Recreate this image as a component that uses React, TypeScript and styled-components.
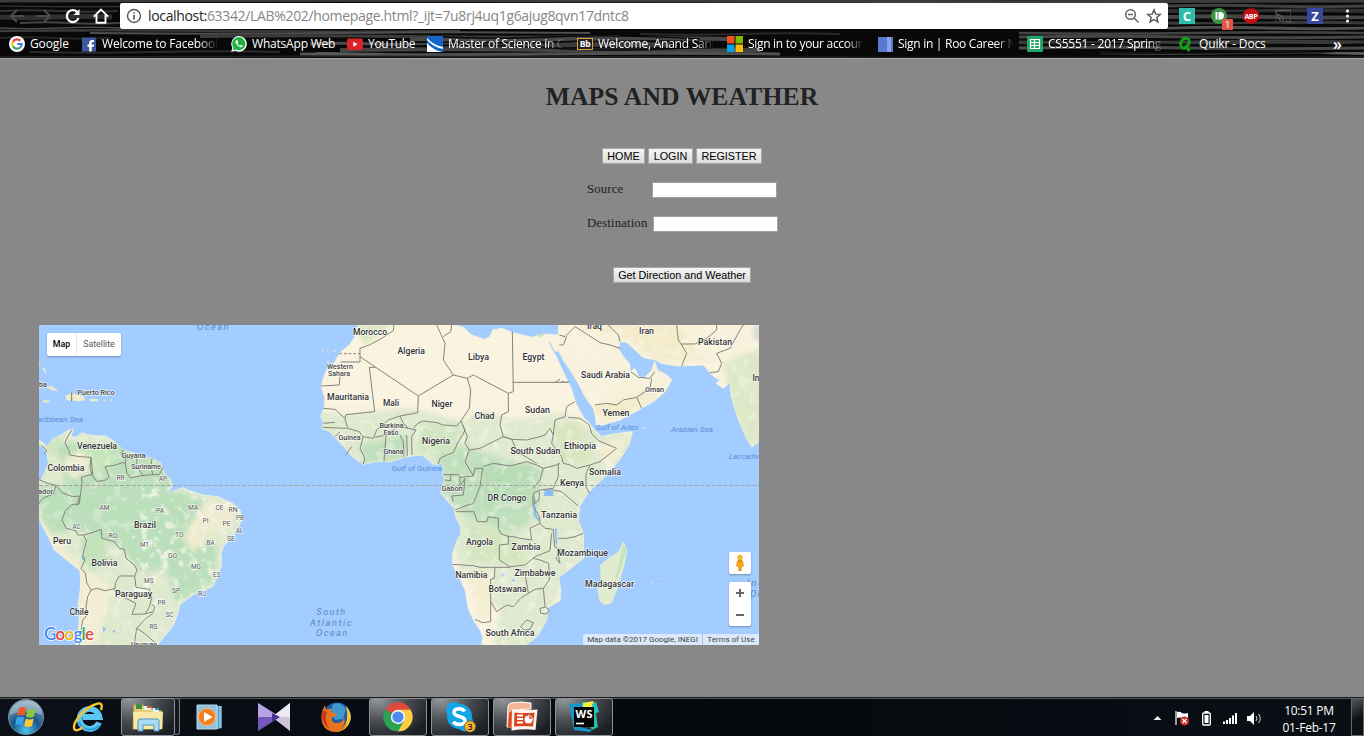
import React from 'react';
import styled, { createGlobalStyle, css } from 'styled-components';

const GlobalStyle = createGlobalStyle`
  html, body { margin: 0; padding: 0; background: #888; overflow: hidden; }
  * { box-sizing: border-box; }
`;

const uiFont = '"Segoe UI", "Open Sans", "Noto Sans", sans-serif';

const Screen = styled.div`
  width: 1364px;
  height: 736px;
  display: flex;
  flex-direction: column;
  overflow: hidden;
  background: #888;
`;

/* ---------- browser chrome ---------- */

const Chrome = styled.header`
  position: relative;
  height: 59px;
  flex: none;
  background: #080808;
  border-bottom: 1px solid #a3a3a3;
  font-family: ${uiFont};
`;

const Backdrop = styled.svg`
  position: absolute;
  inset: 0;
`;

const Toolbar = styled.div`
  position: relative;
  display: flex;
  align-items: center;
  height: 32px;
  padding-left: 9px;
`;

const NavButton = styled.span<{ $gap: number }>`
  display: flex;
  width: 16px;
  height: 16px;
  margin-right: ${(p) => p.$gap}px;
`;

const AddressBar = styled.div`
  display: flex;
  align-items: center;
  width: 1048px;
  height: 26px;
  padding: 0 6px 0 6px;
  background: #fff;
  border-radius: 2px;
`;

const Url = styled.span`
  flex: 1;
  margin-left: 6px;
  font-size: 14px;
  line-height: 20px;
  letter-spacing: -0.34px;
  color: #868686;
  white-space: nowrap;
`;

const Host = styled.span`
  color: #222;
`;

const BarIcon = styled.span`
  display: flex;
  margin-left: 6px;
`;

const Extensions = styled.div`
  display: flex;
  align-items: center;
  gap: 16px;
  margin-left: 11px;
`;

const ExtensionSlot = styled.span`
  position: relative;
  display: flex;
  width: 16px;
  height: 16px;
`;

const Tile = styled.span<{ $bg: string }>`
  width: 16px;
  height: 16px;
  background: ${(p) => p.$bg};
  color: #fff;
  font: 700 13px/16px "Open Sans", sans-serif;
  text-align: center;
`;

const CountBadge = styled.span`
  position: absolute;
  left: 11px;
  top: 11px;
  width: 11px;
  height: 11px;
  border-radius: 1px;
  background: #e2574a;
  color: #fff;
  font: 9px/11px "Open Sans", sans-serif;
  text-align: center;
`;

const MenuDots = styled.span`
  display: flex;
  margin-left: 14px;
`;

const Bookmarks = styled.div`
  position: relative;
  display: flex;
  align-items: center;
  height: 24px;
  padding-left: 9px;
`;

const Bookmark = styled.span<{ $pitch: number }>`
  display: flex;
  align-items: center;
  flex: none;
  width: ${(p) => p.$pitch}px;
`;

const BookmarkLabel = styled.span<{ $fade?: boolean; $track: number }>`
  margin-left: 5px;
  color: #fff;
  font-size: 12px;
  line-height: 18px;
  letter-spacing: ${(p) => p.$track}px;
  white-space: nowrap;
  overflow: hidden;
  ${(p) =>
    p.$fade &&
    css`
      width: 115px;
      mask-image: linear-gradient(90deg, #000 98px, transparent 116px);
    `}
`;

const Overflow = styled.span`
  margin-left: 8px;
  color: #fff;
  font: 600 16px/18px ${uiFont};
`;

/* ---------- page ---------- */

const Page = styled.main`
  flex: 1;
  display: flex;
  flex-direction: column;
  align-items: center;
  color: #222;
  font-family: "Liberation Serif", "Times New Roman", serif;
  font-size: 12.8px;
`;

const Title = styled.h1`
  margin: 23px 0 0;
  font-size: 25.6px;
  line-height: 30px;
  letter-spacing: 0.12px;
`;

const ButtonRow = styled.div`
  display: flex;
  gap: 3px;
  margin-top: 36px;
`;

const PageButton = styled.button<{ $w: number }>`
  width: ${(p) => p.$w}px;
  height: 16px;
  padding: 0;
  border: 1px solid #a6a6a6;
  background: linear-gradient(#f5f5f5, #dcdcdc);
  color: #000;
  font: 10.8px/13px "Liberation Sans", Arial, sans-serif;
  white-space: nowrap;
`;

const Fields = styled.div`
  display: flex;
  flex-direction: column;
  gap: 18px;
  width: 190px;
  margin: 18px 0 35px;
  letter-spacing: 0.13px;
`;

const Field = styled.label<{ $indent: number }>`
  display: grid;
  grid-template-columns: ${(p) => p.$indent}px 125px;
  height: 16px;
  line-height: 15px;
`;

const TextInput = styled.input`
  width: 125px;
  height: 16px;
  padding: 0 2px;
  border: 1px solid #a0a0a0;
  background: #fff;
  outline: none;
`;

const MapFrame = styled.section`
  position: relative;
  align-self: flex-start;
  width: 720px;
  height: 320px;
  margin: 42px 0 0 39px;
  overflow: hidden;
  background: #a3ccff;
  font-family: Roboto, sans-serif;
`;

const MapSvg = styled.svg`
  display: block;
  font-family: Roboto, sans-serif;
`;

const MapTypes = styled.div`
  position: absolute;
  left: 8px;
  top: 8px;
  display: flex;
  height: 23px;
  background: #fff;
  border-radius: 2px;
  box-shadow: 0 1px 2px rgba(0, 0, 0, 0.3);
`;

const MapType = styled.span<{ $w: number; $active?: boolean }>`
  width: ${(p) => p.$w}px;
  font-size: 8.8px;
  line-height: 23px;
  text-align: center;
  font-weight: ${(p) => (p.$active ? 500 : 400)};
  color: ${(p) => (p.$active ? '#000' : '#565656')};
  border-right: ${(p) => (p.$active ? '1px solid #e6e6e6' : '0')};
`;

const MapControls = styled.div`
  position: absolute;
  right: 8px;
  top: 227px;
  display: flex;
  flex-direction: column;
  gap: 8px;
`;

const ControlBox = styled.div<{ $h: number }>`
  width: 22px;
  height: ${(p) => p.$h}px;
  background: #fff;
  border-radius: 2px;
  box-shadow: 0 1px 2px rgba(0, 0, 0, 0.3);
`;

const Attribution = styled.div`
  position: absolute;
  right: 0;
  bottom: 0;
  display: flex;
  width: 176px;
  height: 11px;
  background: rgba(235, 241, 248, 0.78);
  color: #444;
  font-size: 8px;
  line-height: 12px;
  white-space: nowrap;
`;

const Credit = styled.span<{ $w: number; $line?: boolean }>`
  width: ${(p) => p.$w}px;
  text-align: center;
  border-left: ${(p) => (p.$line ? '1px solid #a9c9ee' : '0')};
`;

/* ---------- taskbar ---------- */

const Taskbar = styled.footer`
  display: flex;
  flex: none;
  height: 39px;
  background: linear-gradient(90deg, #0b1018, #05080d 50%, #0a0f16);
  border-top: 1px solid #1a1a1a;
  box-shadow: inset 0 1px 0 #53575c;
  font-family: ${uiFont};
`;

const StartSlot = styled.div`
  display: flex;
  align-items: center;
  justify-content: center;
  width: 59px;
  padding-right: 7px;
`;

const TaskSlot = styled.div<{ $open?: boolean; $w: number }>`
  display: flex;
  align-items: center;
  justify-content: center;
  flex: none;
  width: ${(p) => p.$w}px;
  height: 38px;
  margin-right: ${(p) => 62 - p.$w}px;
  border-radius: 3px;
  ${(p) =>
    p.$open &&
    css`
      border: 1px solid #8d9195;
      background: radial-gradient(ellipse at 15% 0, #96999c 0, #4b4f53 42%, #1b1f24 85%);
    `}
`;

const Stack = styled.div`
  flex: none;
  width: 5px;
  height: 37px;
  margin: 0 3px 0 -8px;
  border: 1px solid #777b80;
  border-left: 0;
  border-radius: 0 3px 3px 0;
  background: #14181d;
`;

const Tray = styled.div`
  display: flex;
  align-items: center;
  margin-left: auto;
`;

const TrayIcons = styled.svg`
  display: block;
`;

const Clock = styled.div`
  width: 80px;
  padding: 3px 4px 0 0;
  color: #fff;
  font-size: 12px;
  line-height: 17px;
  letter-spacing: -0.25px;
  text-align: center;
`;

const ShowDesktop = styled.div`
  width: 13px;
  height: 38px;
  border: 1px solid #62676c;
  background: linear-gradient(150deg, #55595d, #0d1116 55%);
`;

/* ---------- drawings ---------- */

const streaks: [number, number, number, number, string][] = [
  [0, 1, 1364, 3, '#3c3c3c'], [0, 6, 330, 1.5, '#2e2e2e'], [0, 11, 118, 2, '#333'], [0, 17, 112, 5, '#303030'],
  [20, 23, 100, 2, '#444'], [0, 28, 120, 1.5, '#4a4a4a'], [0, 31, 460, 2.5, '#3a3a3a'], [90, 33, 500, 2, '#4e4e4e'],
  [200, 36.5, 420, 3, '#3c3c3c'], [410, 39, 320, 4, '#484848'], [310, 44, 130, 3, '#4a4a4a'], [430, 45, 240, 5, '#3b3b3b'],
  [340, 50, 420, 4, '#444'], [300, 54, 480, 3, '#505050'], [0, 38, 110, 2, '#242424'], [30, 52, 250, 2, '#2c2c2c'],
  [0, 57, 1364, 1.5, '#242424'], [1019, 33, 345, 2.5, '#444'], [1019, 37, 345, 3, '#454545'], [1019, 42.5, 345, 4, '#3a3a3a'],
  [1019, 48, 345, 3, '#4a4a4a'], [1100, 53, 264, 2.5, '#404040'], [1168, 6, 196, 3, '#404040'], [1168, 11, 196, 4, '#303030'],
  [1168, 17, 196, 4, '#454545'], [1168, 23, 196, 3, '#3a3a3a'], [1168, 28, 196, 3, '#505050'], [640, 34, 200, 2, '#2a2a2a'],
];

const ChromeBackdrop = () => (
  <Backdrop width="1364" height="58">
    <g fill="none">
      {streaks.map(([x, y, w, h, c], i) => (
        <path key={i} stroke={c} strokeWidth={h} d={`M${x} ${y}q${w * 0.25} ${i % 2 ? 1.4 : -1.4} ${w * 0.5} 0t${w * 0.5} 0`} />
      ))}
      <path d="M430 36q60 4 120 1t150 2M380 47q80-4 170 1t160-2M450 41q70 4 130 0M1019 45q90-3 170 0t175-1M1168 14q60-3 196 1M1168 26q90-3 196 0M1019 51q100 4 345 0" stroke="#090909" strokeWidth="1.500" />
    </g>
    <path d="M303 55l16-3 70 1-20 2zM1322 54l14-2h28v3z" fill="#5a5a5a" />
  </Backdrop>
);

const GoogleG = () => (
  <svg width="16" height="16" viewBox="0 0 16 16">
    <circle cx="8" cy="8" r="8" fill="#fff" />
    <g fill="none" strokeWidth="2.2">
      <path d="M11.4 4.7A4.7 4.7 0 0 0 3.9 5.8" stroke="#ea4335" />
      <path d="M3.9 5.7a4.7 4.7 0 0 0 0 4.6" stroke="#fbbc05" />
      <path d="M3.9 10.3a4.7 4.7 0 0 0 7.2 1.2" stroke="#34a853" />
      <path d="M11.1 11.5A4.5 4.5 0 0 0 12.7 8H8.2" stroke="#4285f4" />
    </g>
  </svg>
);

const FacebookIcon = () => (
  <svg width="16" height="16" viewBox="0 0 16 16">
    <rect x="1" y="1.500" width="14" height="14" fill="#3b5998" />
    <path d="M8.200 15.500v-4.700H6.500V8.600h1.700V7c0-2 1.100-3 2.900-3H13v2.100h-1.200c-.9 0-1.100.4-1.100 1.100v1.400H13l-.3 2.200h-2v4.700z" fill="#fff" />
  </svg>
);

const WhatsAppIcon = () => (
  <svg width="16" height="16" viewBox="0 0 16 16">
    <path d="M.3 15.8l1-4A7.800 7.800 0 1 1 4.400 14.800z" fill="#fff" />
    <path d="M1.800 14.300l.7-2.600A6.600 6.600 0 1 1 4.700 13.600z" fill="#1fb141" />
    <path d="M5.300 4.200c-1.500 1.200-.8 3 .9 4.900s4 3 5.300 1.500c.6-.8.300-1.100-1.200-1.700-.8-.3-.8.900-1.400.8C7.800 9.200 6.700 8.100 6.500 7.200c0-.5.8-.6.5-1.300-.5-1.300-.8-2.100-1.700-1.700" fill="#fff" />
  </svg>
);

const YouTubeIcon = () => (
  <svg width="16" height="16" viewBox="0 0 16 16">
    <rect x="0" y="2.500" width="16" height="11.500" rx="2" fill="#d9252a" />
    <path d="M6.300 5.800v5l4.200-2.500z" fill="#fff" />
  </svg>
);

const UmkcIcon = () => (
  <svg width="16" height="16" viewBox="0 0 16 16">
    <rect width="16" height="16" fill="#1467c8" />
    <path d="M0 2q6 7 16 9v2Q6 11 0 4zM0 7q6 7 15 9H0z" fill="#fff" />
  </svg>
);

const BbBox = styled.span`
  width: 16px;
  height: 12px;
  border: 1px solid #d3a53a;
  background: #222;
  color: #fff;
  font: 700 8.5px/9px "Open Sans", sans-serif;
  letter-spacing: -0.3px;
  text-align: center;
`;

const MicrosoftIcon = () => (
  <svg width="16" height="16" viewBox="0 0 16 16">
    <path d="M0 0h7.500v7.500H0z" fill="#f25022" />
    <path d="M8.500 0H16v7.500H8.500z" fill="#7fba00" />
    <path d="M0 8.500h7.500V16H0z" fill="#00a4ef" />
    <path d="M8.500 8.500H16V16H8.500z" fill="#ffb900" />
  </svg>
);

const RooIcon = () => (
  <svg width="16" height="16" viewBox="0 0 16 16">
    <rect x="1" y="1" width="15" height="15" fill="#5878d2" />
    <rect x="10" y="1" width="4" height="15" fill="#8aa2e6" />
  </svg>
);

const SheetsIcon = () => (
  <svg width="16" height="16" viewBox="0 0 16 16">
    <rect width="16" height="16" rx="1" fill="#23a566" />
    <path d="M3.500 3.500h9v9h-9zM3.500 6.500h9M3.500 9.500h9M7.500 3.500v9" fill="none" stroke="#fff" strokeWidth="1.200" />
  </svg>
);

const QuikrIcon = () => (
  <svg width="16" height="16" viewBox="0 0 16 16">
    <path d="M8.500 2.200C3.500 1.800.5 9.500 4.500 12c5.500 2 9.500-9 4-9.800M7 9.500l4.500 5.500" fill="none" stroke="#10a316" strokeWidth="2.900" />
  </svg>
);

const bookmarks: { label: string; pitch: number; icon: React.ReactNode; fade?: boolean; track: number }[] = [
  { label: 'Google', pitch: 72, icon: <GoogleG />, track: -0.1 },
  { label: 'Welcome to Facebook', pitch: 150, icon: <FacebookIcon />, fade: true, track: -0.2 },
  { label: 'WhatsApp Web', pitch: 116, icon: <WhatsAppIcon />, track: -0.2 },
  { label: 'YouTube', pitch: 80, icon: <YouTubeIcon />, track: -0.3 },
  { label: 'Master of Science in C', pitch: 150, icon: <UmkcIcon />, fade: true, track: -0.3 },
  { label: 'Welcome, Anand Sanj', pitch: 150, icon: <BbBox>Bb</BbBox>, fade: true, track: -0.24 },
  { label: 'Sign in to your accour', pitch: 150, icon: <MicrosoftIcon />, fade: true, track: -0.3 },
  { label: 'Sign in | Roo Career N', pitch: 150, icon: <RooIcon />, fade: true, track: -0.28 },
  { label: 'CS5551 - 2017 Spring', pitch: 151, icon: <SheetsIcon />, fade: true, track: -0.24 },
  { label: 'Quikr - Docs', pitch: 147, icon: <QuikrIcon />, track: -0.15 },
];

/* Map outlines are drawn at three units per pixel. */
const southAmerica =
  'M0 490L15 480 25 460 38 430 33 398 20 380 0 370 0 355 20 368 35 380 50 357 75 345 98 330 112 328 104 350 118 352 140 338 152 344 180 348 208 348 235 364 262 390 290 398 320 412 350 415 375 430 385 460 402 478 410 495 395 520 440 503 460 512 500 525 545 530 590 550 612 570 616 600 606 625 585 655 562 680 555 700 556 735 545 770 530 800 500 812 470 825 432 853 424 885 412 915 385 950 362 978 122 978 130 900 127 850 134 800 132 752 90 718 55 690 37 650 0 580z';

const africa =
  'M245 0L232 20 226 48 208 75 180 98 165 125 140 150 128 180 124 200 135 235 132 265 122 288 130 305 126 325 150 335 165 352 190 378 215 408 250 433 290 424 330 425 380 410 425 405 445 420 462 434 485 430 492 445 488 465 494 480 485 500 483 520 500 540 523 565 527 590 542 620 543 640 530 665 518 700 518 735 537 770 555 810 565 865 580 900 600 930 608 950 605 978 735 978 775 945 800 900 804 862 840 842 842 808 836 772 873 745 910 715 910 640 896 605 898 560 927 515 980 465 1018 420 1047 375 1057 335 1000 342 965 350 942 328 928 310 910 292 888 250 872 200 852 160 826 105 802 62 812 68 824 92 832 96 838 72 835 45 790 42 755 52 700 38 665 25 638 30 630 50 612 58 575 45 550 22 515 12 515 0z';

const arabia =
  'M145 0L145 45 148 70 146 92 160 120 180 150 205 190 225 230 250 265 255 285 260 315 275 315 330 300 385 270 430 245 465 215 485 180 470 165 442 150 434 125 425 152 402 174 386 170 374 145 362 155 358 130 340 110 325 85 330 65 350 67 375 90 400 113 432 118 455 130 505 138 580 135 600 158 612 170 630 180 618 190 640 205 660 187 664 230 682 290 705 345 725 380 742 370 757 330 757 0z';

const palette = { land: '#faf3df', pale: '#dfe9ce', green: '#bbdfba', line: '#86847d' };

const Borders = styled.g`
  fill: none;
  stroke: ${palette.line};
  stroke-width: 3;
  stroke-linejoin: round;
`;

const WorldMap = () => (
  <MapSvg width="720" height="320" viewBox="39 325 720 320">
    <defs>
      <clipPath id="sa"><path d={southAmerica} /></clipPath>
      <clipPath id="af"><path d={africa} /></clipPath>
      <clipPath id="ar"><path d={arabia} /></clipPath>
      <filter id="soft" x="-20%" y="-20%" width="140%" height="140%"><feGaussianBlur stdDeviation="8" /></filter>
      <filter id="speckle" x="0" y="0" width="100%" height="100%">
        <feTurbulence type="fractalNoise" baseFrequency="0.035" numOctaves="4" seed="8" />
        <feColorMatrix values="0 0 0 0 .96  0 0 0 0 .96  0 0 0 0 .86  0 5 0 0 -2.6" />
      </filter>
    </defs>
    <g transform="translate(36 320) scale(.33333)">
      <path d={southAmerica} fill={palette.pale} stroke="#e8f1e6" strokeWidth="3" />
      <g clipPath="url(#sa)">
        <g filter="url(#soft)">
          <path d="M60 370L240 370 400 440 400 510 520 540 470 620 540 680 540 780 420 850 390 740 320 760 250 680 130 630 40 640 0 560 0 500 90 500z" fill={palette.green} />
          <path d="M130 380l90-10 30 60-60 40z" fill="#c6e5bb" />
          <path d="M80 420L130 390 160 415 160 460 100 470z" fill="#eeeccf" />
          <path d="M510 540L600 550 590 620 530 640 470 700 440 650z" fill="#eeebcf" />
          <path d="M0 580L60 660 140 740 230 800 180 980 120 980 128 760 20 680z" fill="#f3eed3" />
          <path d="M130 650L190 640 230 720 150 760z" fill="#c3e2b8" />
          <path d="M10 480L50 420 80 350 30 360z" fill="#cfe5bc" />
        </g>
        <rect x="290" y="500" width="330" height="350" filter="url(#speckle)" opacity=".6" />
        <rect x="10" y="340" width="400" height="640" filter="url(#speckle)" opacity=".35" />
        <path d="M136 712l8-6 3 12-6 4zM200 920l10 5-8 14zM228 935l8-6 3 10z" fill="#8fbdf2" />
      </g>
      <path d="M25 195l25 5 18 14-20-3zM88 228l18-8 35 8 8 12-22 4-35-3zM160 237h26v7h-24zM22 240l22 2-10 6-12-2zM20 145l5-2 6 14-4 3zM5 128l8 3 2 8zM202 239l5 2v3h-5zM224 238h4v6h-4z" fill="#eeecca" />
      <path d="M107 218v26" stroke="#777" strokeWidth="3" />
      <Borders>
        <path d="M108 330L95 350 87 368 98 390 102 405 130 410 165 412 162 440 168 465 182 484 205 482 220 472 207 440 235 436 260 428 268 430 272 458 284 474 310 468 345 464 370 464 382 440" />
        <path d="M262 390L255 402 270 414 268 430M303 405L302 440 322 468M348 415L345 437 350 464M165 412L170 462 136 472 138 488 130 552 120 555" />
        <path d="M0 475L30 488 60 496 78 518 110 530 130 528 125 552 108 554 88 572 78 600 90 625 120 632 125 645 142 645 172 637 195 628 198 655 235 665 250 685 265 688 270 715 295 735 303 750 296 768 250 768 238 790 236 812" />
        <path d="M60 496L52 522 20 535 0 562M142 645L152 662 145 685 140 708 147 720 135 745 148 760 153 790 165 810 182 805 208 812 235 806M165 810L155 830 150 860 153 885 140 900 135 935 130 975" />
        <path d="M296 768L300 802 340 808 347 835 340 860 328 882 288 883 300 850 270 835 236 812M328 882L352 875 356 860 347 852M352 880L330 895 302 925 325 940 362 972M302 925L294 978M15 375l18 18-10 8" />
      </Borders>
    </g>
    <g transform="translate(280 320) scale(.33333)">
      <path d={africa} fill={palette.land} stroke="#eef0df" strokeWidth="3" />
      <g clipPath="url(#af)">
        <g filter="url(#soft)">
          <path d="M100 275L200 285 350 265 420 270 550 305 600 270 690 300 850 280 920 320 1060 330 1060 400 900 560 930 720 840 800 790 980 640 980 660 870 540 760 500 550 380 450 180 440z" fill={palette.pale} />
          <path d="M240 375L380 345 380 410 250 440zM470 400L560 380 700 430 790 450 770 600 690 640 560 590 490 520z" fill="#c0e0bd" />
          <path d="M580 440L760 430 750 560 620 580z" fill="#b8ddb6" />
          <path d="M410 310L540 310 530 400 420 400z" fill="#d0e6c0" />
          <path d="M560 600L700 650 740 730 560 720z" fill="#d3e6bf" />
          <path d="M820 320L900 300 930 420 850 430z" fill="#dae5bf" />
          <path d="M560 760L640 750 630 880 600 900zM950 380L1050 340 990 460z" fill="#f3edd2" />
          <path d="M230 15L340 15 250 75z" fill="#d9e6c0" />
        </g>
        <path d="M790 508h30v20h-28zM758 545l8 0 3 40 10 15-5 4-15-24zM824 625l6 0 2 50-5-2zM660 760l15 2-8 10zM695 780l8-3 2 9z" fill="#8dbcf5" />
        <rect x="120" y="300" width="940" height="680" filter="url(#speckle)" opacity=".4" />
      </g>
      <Borders>
        <path d="M342 15L340 32 300 58 268 75 240 85 240 110 415 228 520 165 490 120 495 70 470 15M515 15L512 35 490 50M520 165L562 175 580 165 685 220 700 215 697 35M697 187L865 187" />
        <path d="M240 110L240 126 182 126M180 165L178 195 124 198M286 142L268 142 284 275 198 284 195 295M130 265L165 268 195 295 203 325 238 335 248 350 280 355 290 330 325 300 360 288 413 278 415 228" />
        <path d="M562 175L572 210 568 265 543 303 530 318 490 315 470 308 430 303 413 310 400 325M385 325L355 320 318 345 312 425M360 288L370 310 385 325 408 330M360 345L370 365 372 410M380 345L382 408M408 330L395 350 396 405M318 345L285 352M130 310L165 307M128 322L200 325M165 350L180 335M250 350L240 385 255 415 250 432M198 404L215 380" />
        <path d="M543 303L555 330 548 345 535 365 520 398 500 405 480 415 475 432M548 315L562 350 555 370 568 390 600 385 640 365 670 350 695 358M685 220L685 275 665 285 660 315 670 350 695 358 740 360 780 350 795 345 810 325 820 345M568 390L555 425 580 468 540 472 535 464 490 464M580 468L585 445 608 445 600 500 580 550 550 560 525 570M494 480L512 482M512 464V482M540 472L540 500 555 475M555 475L550 525 515 528 520 545" />
        <path d="M610 440L640 430 690 438 740 425 770 435 790 445 830 435 840 430M528 575L582 575 592 605 620 605 625 590 655 595 655 625 662 640 685 650 700 650 720 655 755 660 750 625 780 610 778 590 760 560 758 530M685 645V672L658 675 658 720 690 740 735 735 765 710 810 692 815 640" />
        <path d="M518 733L580 737 600 742 690 742M645 742L643 775 632 778 632 905 608 908 585 898M632 845L650 875 680 855 700 860 722 835 745 820 735 760 710 745 M745 820L765 808 790 805 808 780 806 730 780 720 760 715" />
        <path d="M695 358L705 380 720 400 740 412 770 430M820 345L825 300 855 290 860 260 885 245M820 345L815 370 845 410 850 430 870 435 890 445 930 435 960 425 1010 385 955 362 935 340 928 315M928 315L900 295 865 292M835 430L835 470 820 505 780 510 760 520 765 550 777 540 778 515M820 510L845 515 895 558M790 445L780 480 760 505M930 435L918 460 918 500 928 520M835 655L860 655 885 650 910 640" />
        <path d="M780 610L795 625 820 628 824 680 845 690 835 705 840 730 828 715 835 705M790 805L795 860 808 870 800 882 782 880 780 865 795 862M740 900l20 8-10 20-18 3-10-12z" />
        <path d="M178 101H240M845 184L870 187" strokeDasharray="8 6" />
      </Borders>
      <path d="M126 90l5 3M142 95l4 3M160 94l7-3M142 125l5-2" stroke="#eee9d8" strokeWidth="4" />
    </g>
    <g transform="translate(510 320) scale(.33333)">
      <path d={arabia} fill="#f8f2dc" stroke="#f4f2df" strokeWidth="3" />
      <g clipPath="url(#ar)">
        <g filter="url(#soft)">
          <path d="M180 15L500 15 590 120 440 120 340 50zM250 260L420 210 480 180 430 240 270 310z" fill="#f3ebca" />
          <path d="M640 130L757 80V400L690 350z" fill="#dce8c6" />
          <path d="M730 15H757V60H730z" fill="#d9d9d2" />
        </g>
        <rect x="145" y="10" width="612" height="370" filter="url(#speckle)" opacity=".4" />
      </g>
      <path d="M340 663L352 690 345 730 325 800 305 850 285 856 268 842 262 810 272 780 270 735 300 710 325 695z" fill="#e0ebd0" />
      <path d="M340 672L350 690 335 740 310 800 300 850 320 760z" fill="#c6e3c0" />
      <Borders>
        <path d="M148 45L165 50 185 30 195 20M148 75L160 75 170 50M195 20L230 42 270 68 300 75 330 85M295 15L325 45 330 65M500 15L505 60 515 75 530 100 515 138M515 72L555 72 590 55 620 30 620 15M600 158L625 155 635 130 620 100 660 85 690 30 700 15" />
        <path d="M255 255L290 250 320 255 340 240 380 232 395 265M380 232L420 205 425 175M362 155L385 172 420 175 434 155M135 187L150 178" />
      </Borders>
      <path d="M80 42l24 0-12 12z" fill="#c5e3b6" />
      <path d="M424 788h5M453 776h5M397 323h10" stroke="#dce9d8" strokeWidth="4" />
    </g>
    <path d="M39 485.500H759" stroke="#a5a2aa" strokeWidth="1.200" strokeDasharray="4 1.800" />
    {labels.map(([text, x, y, w, kind], i) => (
      <MapLabel key={i} x={x} y={y} textLength={w} lengthAdjust="spacingAndGlyphs" $kind={kind || 'land'}>
        {text}
      </MapLabel>
    ))}
    <g fontFamily="Lato, sans-serif" fontSize="17" fontWeight="600" stroke="#fff" strokeWidth="1.500" paintOrder="stroke">
      <text x="44" y="640" textLength="50">
        <tspan fill="#4285f4">G</tspan><tspan fill="#ea4335">o</tspan><tspan fill="#f5b400">o</tspan><tspan fill="#4285f4">g</tspan><tspan fill="#34a853">l</tspan><tspan fill="#ea4335">e</tspan>
      </text>
    </g>
  </MapSvg>
);

type Kind = 'land' | 'small' | 'state' | 'sea' | 'ocean';

const kinds: Record<Kind, ReturnType<typeof css>> = {
  land: css`font-size: 8.2px; font-weight: 500; fill: #333;`,
  small: css`font-size: 7.2px; font-weight: 500; fill: #444;`,
  state: css`font-size: 6.8px; fill: #555;`,
  sea: css`font-size: 7.4px; font-style: italic; fill: #5b8fdc; stroke: none;`,
  ocean: css`font-size: 8.6px; font-style: italic; letter-spacing: 1.4px; fill: #5b87c4; stroke: none;`,
};

const MapLabel = styled.text<{ $kind: Kind }>`
  stroke: rgba(255, 255, 255, 0.75);
  stroke-width: 1.4px;
  paint-order: stroke;
  ${(p) => kinds[p.$kind]}
`;

const labels: [string, number, number, number, Kind?][] = [
  ['Ocean', 197, 330, 33, 'ocean'], ['ba', 39, 387, 8, 'small'], ['Puerto Rico', 77.500, 395, 37, 'small'],
  ['aribbean Sea', 37, 421.500, 46, 'sea'], ['Venezuela', 77, 449, 40], ['Guyana', 121.500, 458, 24, 'small'],
  ['Suriname', 131, 469, 30, 'small'], ['Colombia', 47.500, 470.500, 37], ['ador', 38, 494, 15, 'small'],
  ['Brazil', 134, 527.500, 22], ['Peru', 53, 543.500, 18], ['Bolivia', 91.500, 566, 26], ['Paraguay', 115, 597, 37],
  ['Chile', 69.500, 614.500, 19], ['Uruguay', 131, 646.500, 26, 'small'],
  ['RR', 116.500, 480, 8, 'state'], ['AP', 159, 481, 8, 'state'], ['AM', 99.500, 510, 10, 'state'], ['PA', 156, 513, 8, 'state'],
  ['MA', 188, 510, 10, 'state'], ['CE', 215.500, 510, 8, 'state'], ['RN', 228.500, 511.500, 9, 'state'], ['PI', 202.500, 523, 6, 'state'],
  ['PE', 222.500, 526, 8, 'state'], ['PB', 236, 520, 8, 'state'], ['AL', 236, 533, 7, 'state'], ['SE', 227, 541, 8, 'state'],
  ['AC', 72.500, 528.500, 8, 'state'], ['RO', 108.500, 538, 9, 'state'], ['TO', 175, 537, 8.500, 'state'], ['MT', 140, 547, 9, 'state'],
  ['BA', 206.500, 544.500, 8, 'state'], ['GO', 168, 558, 9, 'state'], ['MG', 191, 568.500, 10, 'state'], ['ES', 213, 576.500, 7.500, 'state'],
  ['MS', 144, 583, 9.500, 'state'], ['SP', 172, 592.500, 8, 'state'], ['RJ', 198, 596, 8, 'state'], ['PR', 157.500, 604.500, 8, 'state'],
  ['SC', 165.500, 617, 8, 'state'], ['RS', 149.500, 628.500, 8, 'state'],
  ['Morocco', 353, 335, 34], ['Algeria', 397.500, 354, 27.500], ['Libya', 468, 360, 21], ['Egypt', 522.500, 360, 22],
  ['Western', 327, 368.500, 26, 'small'], ['Sahara', 328, 376, 22, 'small'], ['Mauritania', 327, 400, 42], ['Mali', 383, 405.500, 16],
  ['Niger', 431.500, 407, 21], ['Chad', 474.500, 419, 20], ['Burkina', 379.500, 427.500, 24, 'small'], ['Faso', 383.500, 435, 15, 'small'],
  ['Guinea', 338.500, 439.500, 22, 'small'], ['Nigeria', 422, 444, 28], ['Ghana', 383.500, 454, 20, 'small'],
  ['Gulf of Guinea', 391.500, 471, 50, 'sea'], ['Gabon', 441.500, 491, 21, 'small'], ['DR Congo', 487.500, 501, 39],
  ['Angola', 466, 545, 27], ['Namibia', 455.500, 578, 32], ['Zambia', 511.500, 549.500, 29], ['Zimbabwe', 514.500, 576, 41],
  ['Botswana', 488.500, 592, 38], ['South Africa', 485.500, 636, 49], ['Sudan', 525, 412.500, 25], ['South Sudan', 510.500, 453.500, 50],
  ['Ethiopia', 564, 449, 32], ['Somalia', 589, 475, 32], ['Kenya', 560, 486, 24], ['Tanzania', 541, 517.500, 36],
  ['Mozambique', 557, 555.500, 51], ['Madagascar', 585, 586.500, 49], ['Yemen', 602.500, 415.500, 27], ['Oman', 645, 391.500, 19, 'small'],
  ['Saudi Arabia', 581, 377.500, 49], ['Iraq', 587, 329, 15], ['Iran', 639, 333.500, 15], ['Pakistan', 698, 344.500, 34],
  ['In', 752.500, 380.500, 7], ['Gulf of Aden', 595.500, 430, 43, 'sea'], ['Arabian Sea', 671, 431.500, 42, 'sea'],
  ['Laccadive', 729, 459, 34, 'sea'], ['South', 316.500, 615, 30, 'ocean'], ['Atlantic', 310, 625.500, 43, 'ocean'],
  ['Ocean', 316, 636, 33, 'ocean'], ['Indian', 747, 586, 36, 'ocean'], ['Ocean', 750, 596.500, 33, 'ocean'],
];

const Pegman = () => (
  <svg width="22" height="22" viewBox="0 0 22 22">
    <path d="M7.800 9q3.200-2 6.400 0l.8 5-2 1-.5 3h-3L9 15l-2-1z" fill="#f2a51f" />
    <circle cx="11" cy="5.500" r="2.700" fill="#f6b32b" />
    <path d="M9 8.500q2 1.500 4 0M9.500 18.300h3" stroke="#c07813" fill="none" />
  </svg>
);

const ZoomGlyphs = () => (
  <svg width="22" height="44" viewBox="0 0 22 44">
    <path d="M7 11h8M11 7v8M7 33h8" stroke="#666" strokeWidth="2" />
  </svg>
);

const StartOrb = () => (
  <svg width="38" height="38" viewBox="0 0 38 38">
    <defs>
      <radialGradient id="orb" cx=".5" cy=".9" r=".9">
        <stop offset="0" stopColor="#49c8ee" /><stop offset=".45" stopColor="#17568c" /><stop offset="1" stopColor="#8fa9b8" />
      </radialGradient>
    </defs>
    <circle cx="19" cy="19" r="17.500" fill="url(#orb)" stroke="#7290a4" />
    <path d="M3 17Q4 4 19 3t16 14Q19 10 3 17" fill="#fff" opacity=".3" />
    <path d="M12 10q4-2 7 0l-1.500 8q-4-2-7.500 0z" fill="#ee5a24" />
    <path d="M20.500 10.800q4 2 8 0l-1.600 8q-4 2-7.900 0z" fill="#8cc63f" />
    <path d="M9.600 19.600q4-2 7.500 0l-1.500 7.800q-4-2-7.500 0z" fill="#38a3e8" />
    <path d="M18.700 20.400q4 2 7.900 0L25 28q-4 2-7.800 0z" fill="#fdc82f" />
  </svg>
);

const IeIcon = () => (
  <svg width="34" height="34" viewBox="0 0 34 34">
    <path d="M28 22.500A10 10 0 1 1 28.500 17H12" fill="none" stroke="#5cc6f2" strokeWidth="5.800" />
    <path d="M28.500 25A12 12 0 0 1 8 22" fill="none" stroke="#2b9bdc" strokeWidth="2" />
    <path d="M30 10c2-6 0-8-6-5.500C14 8 2 21 3 28c.5 4 6 2 9-1" fill="none" stroke="#f5c52c" strokeWidth="2.400" />
  </svg>
);

const ExplorerIcon = () => (
  <svg width="34" height="32" viewBox="0 0 34 32">
    <path d="M3 4h9l2 3h7l2 3h8v18H2z" fill="#e6cd72" stroke="#c9a94c" />
    <path d="M5 3h6v5H5z" fill="#3b8e45" /><path d="M13 5h7v4h-7z" fill="#e9efe9" /><path d="M16 5h4v2h-4z" fill="#d85435" />
    <path d="M22 7h6v4h-6z" fill="#eef4f8" /><path d="M24 7h4v2h-4z" fill="#2f93a8" />
    <path d="M2 11h30l-1 17H3z" fill="#f7e8a6" />
    <path d="M7 30V20q0-2 2-2h17q2 0 2 2v10h-5v-6H12v6z" fill="#a9dcf3" stroke="#4a97c4" />
  </svg>
);

const MediaIcon = () => (
  <svg width="30" height="30" viewBox="0 0 30 30">
    <path d="M9 3l18 1v22l-4 1H9z" fill="#5697be" /><path d="M25 4v22M22 4v23" stroke="#c4e4f4" />
    <path d="M2 3h20v24H2z" fill="#8fc0dc" stroke="#b7daea" />
    <circle cx="12" cy="15" r="8.700" fill="#f07f22" stroke="#f9c08a" />
    <path d="M9 10l8.500 5L9 20z" fill="#fff" />
  </svg>
);

const KmIcon = () => (
  <svg width="34" height="30" viewBox="0 0 34 30">
    <path d="M1 1l22 14L1 29z" fill="#7358bd" /><path d="M1 1l22 14H1z" fill="#b8a4e5" />
    <path d="M33 1v28L15 15z" fill="#ccc6d8" /><path d="M33 1v14H15z" fill="#eeeaf3" />
    <path d="M15 11l8 4-8 5z" fill="#47348e" />
  </svg>
);

const FirefoxIcon = () => (
  <svg width="32" height="32" viewBox="0 0 32 32">
    <circle cx="17" cy="15.500" r="14" fill="#1f5c9f" />
    <path d="M13 3q8-3 13 5l-3 10-8 1q-6-8-2-16" fill="#3d98cf" />
    <path d="M26 5q6 7 4.500 14-3 11-14.500 12 9-4 11-12 1-7-1-14" fill="#fbc92f" />
    <path d="M5 4l1 5q3-2 6-1l-1 3 6 2-1 2-4 1q-1 6 5 6 5 0 7-5 2 5-2 9 4-1 6-6-2 10-12 11Q6 31 2.500 23 0 15 3 8z" fill="#e8721d" />
    <path d="M2.500 9q-3 12 7 19Q4 20 7 11z" fill="#c93a1b" />
  </svg>
);

const ChromeIcon = () => (
  <svg width="32" height="32" viewBox="0 0 32 32">
    <path d="M16 16L3.300 8.700A14.600 14.600 0 0 1 28.700 8.700z" fill="#dd4b3e" />
    <path d="M16 16L28.700 8.700A14.600 14.600 0 0 1 16 30.600z" fill="#fdcd3f" />
    <path d="M16 16L16 30.600A14.600 14.600 0 0 1 3.300 8.700z" fill="#2ca152" />
    <path d="M16 8.700h12.700L22 18z" fill="#fdcd3f" /><path d="M9.700 12.300L3.300 8.700 9.700 20z" fill="#2ca152" /><path d="M22.300 19.600L16 30.600l-4-10z" fill="#2ca152" />
    <circle cx="16" cy="16" r="7.200" fill="#f5f5f5" /><circle cx="16" cy="16" r="5.600" fill="#4b8bf4" />
  </svg>
);

const SkypeIcon = () => (
  <svg width="32" height="32" viewBox="0 0 32 32">
    <circle cx="10" cy="9" r="8" fill="#12a5e8" /><circle cx="21" cy="22" r="8.500" fill="#12a5e8" /><circle cx="15.500" cy="15.500" r="12.500" fill="#12a5e8" />
    <path d="M20.500 10.500C19 7 10 6.500 10 11.500c0 5 11 3 11 8 0 5.500-10 4.500-11.500 1" fill="none" stroke="#fff" strokeWidth="3.600" />
    <circle cx="26" cy="25.500" r="5.700" fill="#f9b32c" stroke="#6e4a13" strokeWidth=".7" />
    <text x="23.600" y="29" fontSize="9" fontWeight="600" fill="#222" fontFamily="Open Sans, sans-serif">3</text>
  </svg>
);

const PowerPointIcon = () => (
  <svg width="34" height="32" viewBox="0 0 34 32">
    <path d="M6 2q10-2 20 0v6L8 9 7 26H2L3 6q0-3 3-4" fill="#f6b597" stroke="#fff" />
    <path d="M4 12l4-3-1 18-4-1z" fill="#de4b21" />
    <path d="M7 8.500q11 1 25.500 0l-2 20.500q-11-1.500-24 .5z" fill="#fff4ee" />
    <path d="M9.500 11.500q9 1 20 .3l-1.500 13.700q-9-1-19 0z" fill="#d8441c" />
    <path d="M12 14.500h6M12 18h6M12 21.500h6" stroke="#fff" strokeWidth="1.800" />
    <circle cx="23.500" cy="18.500" r="4" fill="#fff" /><path d="M24 18V13.500l4.200 4.500z" fill="#d8441c" stroke="#fff" strokeWidth=".6" />
  </svg>
);

const WebStormIcon = () => (
  <svg width="34" height="34" viewBox="0 0 34 34">
    <path d="M2 4l15-1-4 24 12 3-2 2-16-2z" fill="#1597c9" /><path d="M15 2l10 1 6 5-2 6 2 13-6 3-10-18z" fill="#20bda9" />
    <path d="M16 3l10-2 3 8-5 3-8-4z" fill="#f4ef3e" /><path d="M25 4l4-2 3 10-6 2z" fill="#24c5c1" />
    <rect x="7" y="7" width="20" height="20" fill="#050505" />
    <text x="8.500" y="17.500" textLength="17" fontFamily="Open Sans, sans-serif" fontSize="11" fontWeight="700" fill="#fff">WS</text>
    <path d="M9 23.500h8" stroke="#fff" strokeWidth="1.600" />
  </svg>
);

const TrayDrawing = () => (
  <TrayIcons width="120" height="38" viewBox="1153 698 120 38">
    <path d="M1155.500 720l4-4 4 4z" fill="#eee" />
    <path d="M1178 711v14" stroke="#fff" strokeWidth="1.200" /><path d="M1179 712q3-1 5 1 2 1 6 0v6q-4 1-6-1-2-1-5 0z" fill="#fff" />
    <circle cx="1186.500" cy="721" r="4.600" fill="#d22d2b" /><path d="M1184.500 719l4 4m0-4l-4 4" stroke="#fff" strokeWidth="1.300" />
    <rect x="1204.700" y="713" width="7.600" height="12" rx="1" fill="none" stroke="#fff" strokeWidth="1.300" /><path d="M1206.500 715h4v8h-4zM1206.500 711h4v2h-4z" fill="#fff" />
    <path d="M1226 721.500v2.500M1229 720v4M1232 718v6M1235 715.500v8.500M1238 713v11" stroke="#fff" strokeWidth="2" />
    <path d="M1249 716h3l4-4v13l-4-4h-3z" fill="#fff" /><path d="M1258 716q2 2.500 0 5M1260.500 714q3.500 4.500 0 9" fill="none" stroke="#ddd" />
  </TrayIcons>
);

export default function App() {
  return (
    <Screen>
      <GlobalStyle />
      <Chrome>
        <ChromeBackdrop />
        <Toolbar>
          <NavButton $gap={11}>
            <svg width="16" height="16" fill="none" stroke="#4c4c4c" strokeWidth="2"><path d="M15 8H2.500M8 2L2 8l6 6" /></svg>
          </NavButton>
          <NavButton $gap={13}>
            <svg width="16" height="16" fill="none" stroke="#4c4c4c" strokeWidth="2"><path d="M1 8h12.500M8 2l6 6-6 6" /></svg>
          </NavButton>
          <NavButton $gap={12}>
            <svg width="16" height="16" fill="none" stroke="#fff" strokeWidth="2.200"><path d="M13.500 10A6 6 0 1 1 12.300 4" /><path d="M14.500 1v6H8.500z" fill="#fff" stroke="none" /></svg>
          </NavButton>
          <NavButton $gap={11}>
            <svg width="16" height="16" fill="none" stroke="#fff" strokeWidth="1.900"><path d="M.8 8.700L8 1.500l7.200 7.200M3.500 7v7.800h9V7" /></svg>
          </NavButton>
          <AddressBar>
            <svg width="16" height="16" fill="none" stroke="#555" strokeWidth="1.400"><circle cx="8" cy="8" r="6.500" /><path d="M8 7v4.500M8 4.200v1.500" strokeWidth="1.700" /></svg>
            <Url><Host>localhost:</Host>63342/LAB%202/homepage.html?_ijt=7u8rj4uq1g6ajug8qvn17dntc8</Url>
            <BarIcon>
              <svg width="16" height="16" fill="none" stroke="#666" strokeWidth="1.500"><circle cx="6.500" cy="6.500" r="4.800" /><path d="M4 6.500h5M10 10l4.500 4.500" /></svg>
            </BarIcon>
            <BarIcon>
              <svg width="16" height="16" fill="none" stroke="#555" strokeWidth="1.400"><path d="M8 1.800l1.700 4.300 4.600.3-3.500 3 1.100 4.500L8 11.500l-3.900 2.400 1.100-4.500-3.500-3 4.600-.3z" /></svg>
            </BarIcon>
          </AddressBar>
          <Extensions>
            <Tile $bg="#2dbda8">C</Tile>
            <ExtensionSlot>
              <svg width="16" height="16"><circle cx="8" cy="8" r="8" fill="#3d9447" /><path d="M4.500 4h2v7.500h-2zM7.500 4H9q4 0 4 3.700t-4 3.800H7.500z" fill="#fff" /></svg>
              <CountBadge>1</CountBadge>
            </ExtensionSlot>
            <ExtensionSlot>
              <svg width="17" height="16" viewBox="0 0 17 16"><path d="M5 0h7l5 5v6l-5 5H5l-5-5V5z" fill="#c70d13" /><text x="1.500" y="11" textLength="14" fontSize="7.500" fontWeight="700" fill="#fff" fontFamily="Open Sans, sans-serif">ABP</text></svg>
            </ExtensionSlot>
            <ExtensionSlot>
              <svg width="17" height="16" fill="none" stroke="#5a5a5a" strokeWidth="1.300"><path d="M1 6V2.500h15v11h-6M1 14v-1.500M1 9.500q4 0 4.500 4.500M1 6.500q7 0 7.500 7.500" /></svg>
            </ExtensionSlot>
            <Tile $bg="#36479e">Z</Tile>
          </Extensions>
          <MenuDots>
            <svg width="20" height="16"><g fill="#fff"><circle cx="10.500" cy="3" r="1.500" /><circle cx="10.500" cy="8" r="1.500" /><circle cx="10.500" cy="13" r="1.500" /></g></svg>
          </MenuDots>
        </Toolbar>
        <Bookmarks>
          {bookmarks.map((b) => (
            <Bookmark key={b.label} $pitch={b.pitch}>
              {b.icon}
              <BookmarkLabel $fade={b.fade} $track={b.track}>{b.label}</BookmarkLabel>
            </Bookmark>
          ))}
          <Overflow>»</Overflow>
        </Bookmarks>
      </Chrome>
      <Page>
        <Title>MAPS AND WEATHER</Title>
        <ButtonRow>
          <PageButton $w={43}>HOME</PageButton>
          <PageButton $w={45}>LOGIN</PageButton>
          <PageButton $w={66}>REGISTER</PageButton>
        </ButtonRow>
        <Fields>
          <Field $indent={65}>Source<TextInput /></Field>
          <Field $indent={66}>Destination<TextInput /></Field>
        </Fields>
        <PageButton $w={138}>Get Direction and Weather</PageButton>
        <MapFrame>
          <WorldMap />
          <MapTypes>
            <MapType $w={30} $active>Map</MapType>
            <MapType $w={44}>Satellite</MapType>
          </MapTypes>
          <MapControls>
            <ControlBox $h={22}><Pegman /></ControlBox>
            <ControlBox $h={44}><ZoomGlyphs /></ControlBox>
          </MapControls>
          <Attribution>
            <Credit $w={119}>Map data ©2017 Google, INEGI</Credit>
            <Credit $w={57} $line>Terms of Use</Credit>
          </Attribution>
        </MapFrame>
      </Page>
      <Taskbar>
        <StartSlot><StartOrb /></StartSlot>
        <TaskSlot $w={58}><IeIcon /></TaskSlot>
        <TaskSlot $w={54} $open><ExplorerIcon /></TaskSlot>
        <Stack />
        <TaskSlot $w={54}><MediaIcon /></TaskSlot>
        <TaskSlot $w={58}><KmIcon /></TaskSlot>
        <TaskSlot $w={58}><FirefoxIcon /></TaskSlot>
        <TaskSlot $w={58} $open><ChromeIcon /></TaskSlot>
        <TaskSlot $w={58} $open><SkypeIcon /></TaskSlot>
        <TaskSlot $w={58} $open><PowerPointIcon /></TaskSlot>
        <TaskSlot $w={58} $open><WebStormIcon /></TaskSlot>
        <Tray>
          <TrayDrawing />
          <Clock>10:51 PM<br />01-Feb-17</Clock>
          <ShowDesktop />
        </Tray>
      </Taskbar>
    </Screen>
  );
}
